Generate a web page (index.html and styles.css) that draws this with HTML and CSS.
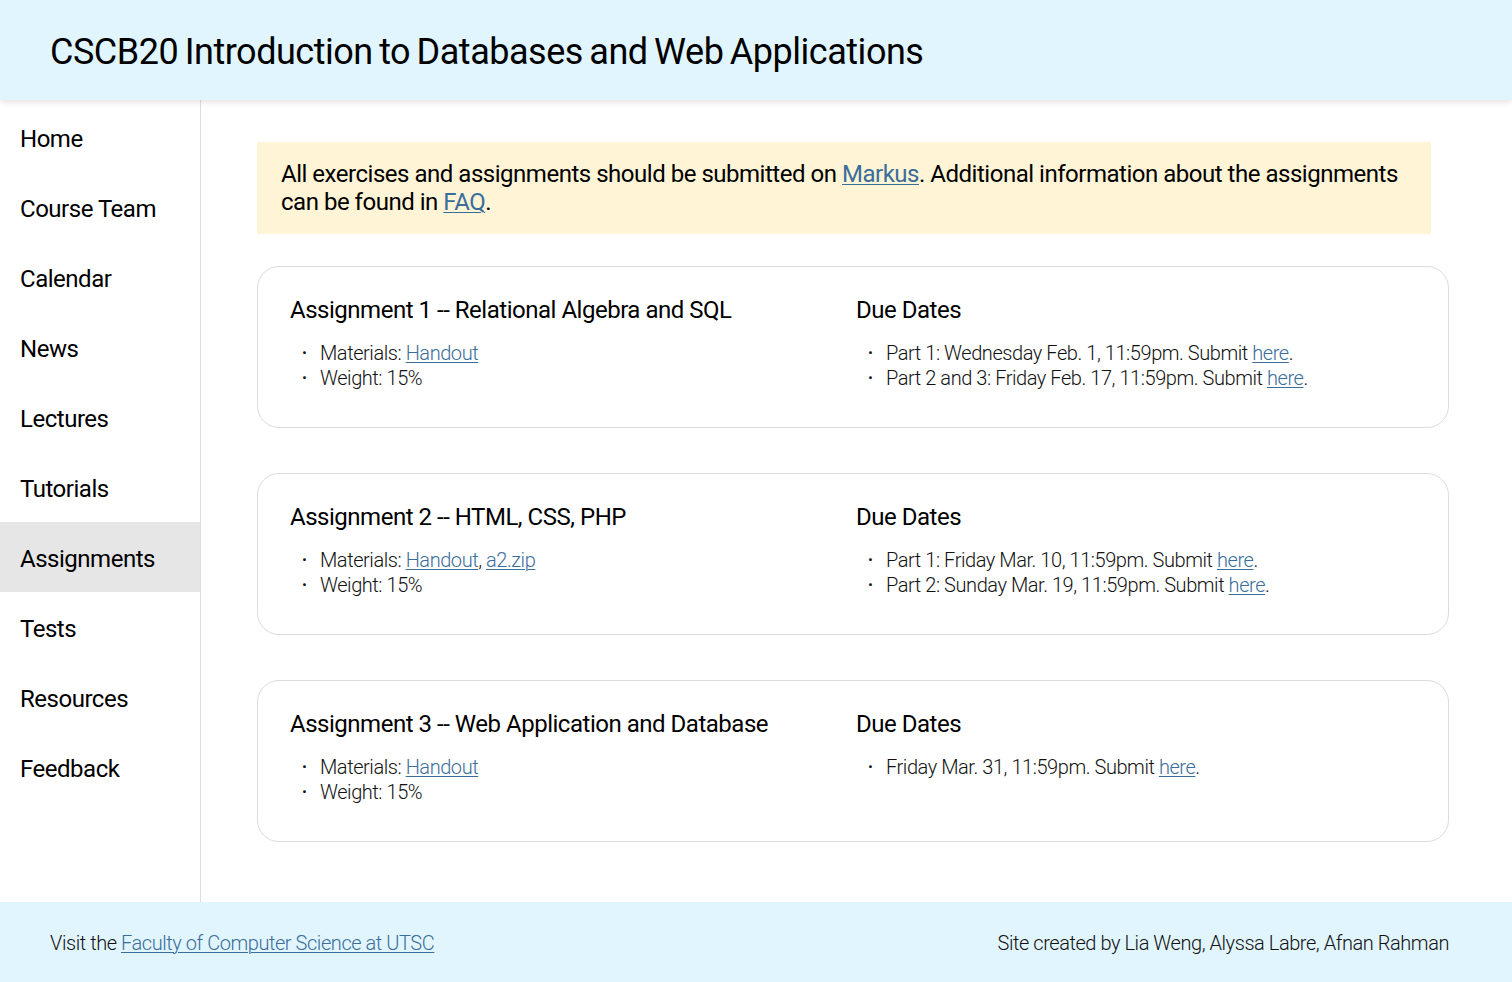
FILE: index.html
```html
<!DOCTYPE html>
<html lang="en">
<head>
<meta charset="utf-8">
<title>CSCB20 Assignments</title>
<link rel="stylesheet" href="styles.css">
</head>
<body>
<header class="site-header">
  <h1 class="site-title">CSCB20 Introduction to Databases and Web Applications</h1>
</header>
<div class="layout">
  <nav class="sidebar">
    <a class="nav-item" href="#">Home</a>
    <a class="nav-item" href="#">Course Team</a>
    <a class="nav-item" href="#">Calendar</a>
    <a class="nav-item" href="#">News</a>
    <a class="nav-item" href="#">Lectures</a>
    <a class="nav-item" href="#">Tutorials</a>
    <a class="nav-item active" href="#">Assignments</a>
    <a class="nav-item" href="#">Tests</a>
    <a class="nav-item" href="#">Resources</a>
    <a class="nav-item" href="#">Feedback</a>
  </nav>
  <main class="content">
    <div class="notice">
      All exercises and assignments should be submitted on <a href="#">Markus</a>. Additional information about the assignments can be found in <a href="#">FAQ</a>.
    </div>

    <section class="card">
      <div class="col">
        <h2 class="card-title">Assignment 1 -- Relational Algebra and SQL</h2>
        <ul class="list">
          <li>Materials: <a href="#">Handout</a></li>
          <li>Weight: 15%</li>
        </ul>
      </div>
      <div class="col">
        <h2 class="card-title">Due Dates</h2>
        <ul class="list">
          <li>Part 1: Wednesday Feb. 1, 11:59pm. Submit <a href="#">here</a>.</li>
          <li>Part 2 and 3: Friday Feb. 17, 11:59pm. Submit <a href="#">here</a>.</li>
        </ul>
      </div>
    </section>

    <section class="card">
      <div class="col">
        <h2 class="card-title">Assignment 2 -- HTML, CSS, PHP</h2>
        <ul class="list">
          <li>Materials: <a href="#">Handout</a>, <a href="#">a2.zip</a></li>
          <li>Weight: 15%</li>
        </ul>
      </div>
      <div class="col">
        <h2 class="card-title">Due Dates</h2>
        <ul class="list">
          <li>Part 1: Friday Mar. 10, 11:59pm. Submit <a href="#">here</a>.</li>
          <li>Part 2: Sunday Mar. 19, 11:59pm. Submit <a href="#">here</a>.</li>
        </ul>
      </div>
    </section>

    <section class="card">
      <div class="col">
        <h2 class="card-title">Assignment 3 -- Web Application and Database</h2>
        <ul class="list">
          <li>Materials: <a href="#">Handout</a></li>
          <li>Weight: 15%</li>
        </ul>
      </div>
      <div class="col">
        <h2 class="card-title">Due Dates</h2>
        <ul class="list">
          <li>Friday Mar. 31, 11:59pm. Submit <a href="#">here</a>.</li>
        </ul>
      </div>
    </section>
  </main>
</div>
<footer class="site-footer">
  <p class="footer-text">Visit the <a href="#">Faculty of Computer Science at UTSC</a></p>
  <p class="footer-text">Site created by Lia Weng, Alyssa Labre, Afnan Rahman</p>
</footer>
</body>
</html>
```

FILE: styles.css
```css
* { box-sizing: border-box; }

html, body {
  margin: 0;
  padding: 0;
  height: 100%;
}

body {
  font-family: Roboto, "Liberation Sans", sans-serif;
  letter-spacing: -0.03em;
  color: #000;
  background: #fff;
  display: flex;
  flex-direction: column;
  height: 982px;
  overflow: hidden;
}

a {
  color: #3a6d9a;
  text-decoration: underline;
  text-underline-offset: 2px;
  text-decoration-thickness: 1px;
}

.site-header {
  height: 100px;
  flex: 0 0 100px;
  background: #e1f5fe;
  box-shadow: 0 2px 6px rgba(0, 0, 0, 0.12);
  display: flex;
  align-items: center;
  padding: 3px 50px 0;
  position: relative;
  z-index: 1;
}

.site-title {
  margin: 0;
  font-size: 36px;
  font-weight: 400;
  word-spacing: -2px;
}

.layout {
  flex: 1;
  display: flex;
  min-height: 0;
}

.sidebar {
  width: 201px;
  flex: 0 0 201px;
  border-right: 1px solid #ddd;
  padding-top: 2px;
  display: flex;
  flex-direction: column;
}

.nav-item {
  display: flex;
  align-items: center;
  height: 70px;
  padding: 4px 0 0 20px;
  font-size: 24px;
  color: #000;
  text-decoration: none;
}

.nav-item.active { background: #e6e6e6; }

.content {
  flex: 1;
  padding: 42px 0 0 56px;
}

.notice {
  width: 1174px;
  background: #fff4d6;
  padding: 18px 24px;
  font-size: 24px;
  line-height: 28px;
  margin-bottom: 32px;
}

.card {
  width: 1192px;
  border: 1px solid #dcdcdc;
  border-radius: 22px;
  padding: 29px 32px 36px;
  display: grid;
  grid-template-columns: 1fr 1fr;
  column-gap: 6px;
  margin-bottom: 45px;
}

.card-title {
  margin: 0 0 17px;
  font-size: 24px;
  font-weight: 400;
  line-height: 28px;
}

.list {
  margin: 0;
  padding-left: 30px;
  list-style: none;
  font-size: 20px;
  font-weight: 300;
  line-height: 25px;
  letter-spacing: -0.022em;
  color: #111;
}

.list li { position: relative; }

.list li::before {
  content: "\2022";
  position: absolute;
  left: -18px;
  top: 0;
  font-size: 15px;
  color: #111;
}

.site-footer {
  height: 80px;
  flex: 0 0 80px;
  background: #e1f5fe;
  display: flex;
  align-items: center;
  justify-content: space-between;
  padding: 2px 63px 0 50px;
}

.footer-text {
  margin: 0;
  font-size: 20px;
  font-weight: 300;
  letter-spacing: -0.022em;
  color: #111;
}
```
